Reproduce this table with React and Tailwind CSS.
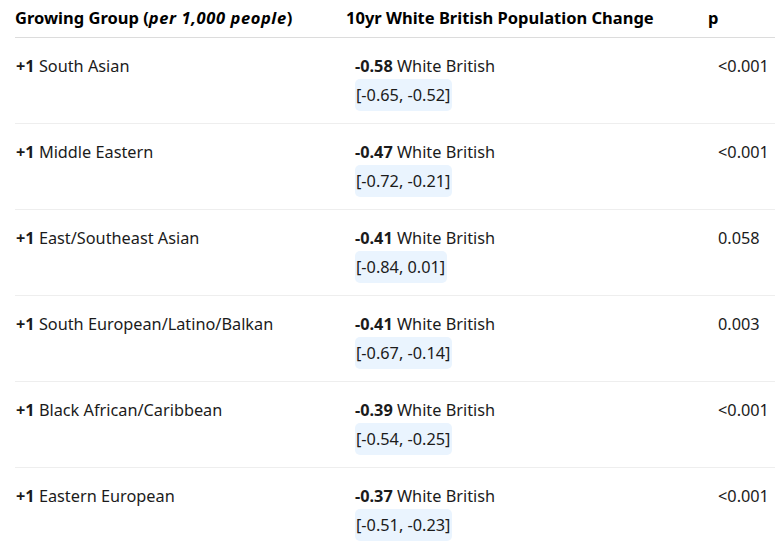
import React from "react";

const rows = [
  { g: "South Asian", v: "-0.58", ci: "[-0.65, -0.52]", p: "<0.001" },
  { g: "Middle Eastern", v: "-0.47", ci: "[-0.72, -0.21]", p: "<0.001" },
  { g: "East/Southeast Asian", v: "-0.41", ci: "[-0.84, 0.01]", p: "0.058" },
  { g: "South European/Latino/Balkan", v: "-0.41", ci: "[-0.67, -0.14]", p: "0.003" },
  { g: "Black African/Caribbean", v: "-0.39", ci: "[-0.54, -0.25]", p: "<0.001" },
  { g: "Eastern European", v: "-0.37", ci: "[-0.51, -0.23]", p: "<0.001" },
];

export default function App() {
  return (
    <div
      className="w-[783px] h-[554px] overflow-hidden bg-white text-[#1b1b1b] pl-[15px] pr-[8px]"
      style={{ fontFamily: '"Noto Sans", "Open Sans", sans-serif' }}
    >
      <div className="flex h-[38px] items-center border-b border-[#dcdcdc] text-[16.5px] font-bold text-black">
        <div className="w-[331px]">
          Growing Group (<span className="italic tracking-[0.6px]">per 1,000 people</span>)
        </div>
        <div className="w-[362px]">10yr White British Population Change</div>
        <div className="flex-1">p</div>
      </div>
      {rows.map((r, i) => (
        <div
          key={i}
          className="flex border-b border-[#eeeeee] last:border-b-0 pt-[16px] pb-[12px] text-[16.3px] leading-[24px]"
        >
          <div className="w-[331px] pl-[1px]">
            <span className="font-bold">+1</span> {r.g}
          </div>
          <div className="w-[372px] pl-[9px] flex flex-col items-start">
            <div>
              <span className="font-bold">{r.v}</span> White British
            </div>
            <div className="mt-[1px] rounded-[5px] bg-[#eaf4fe] py-[4px] pl-[1px] pr-[2px]">
              {r.ci}
            </div>
          </div>
          <div className="flex-1">{r.p}</div>
        </div>
      ))}
    </div>
  );
}
